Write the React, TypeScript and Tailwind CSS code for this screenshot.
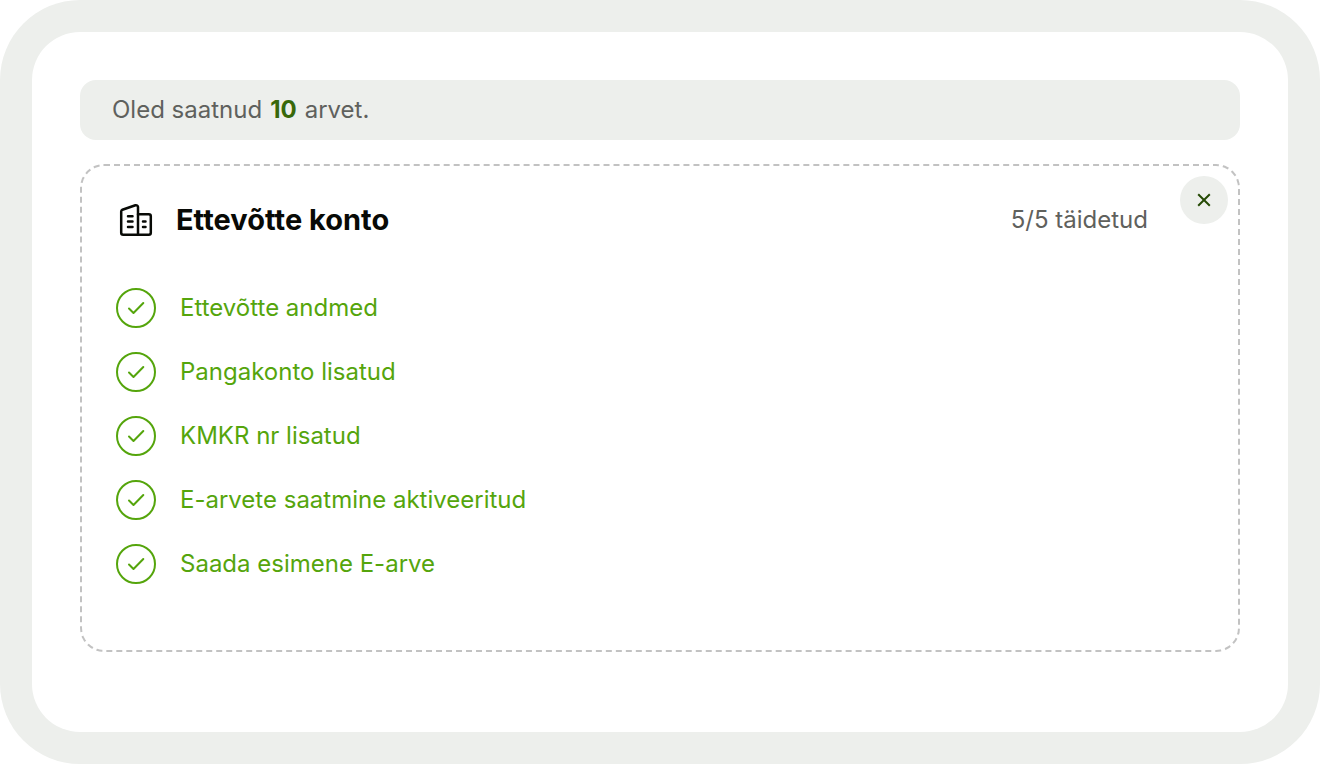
const tasks = [
  'Ettevõtte andmed',
  'Pangakonto lisatud',
  'KMKR nr lisatud',
  'E-arvete saatmine aktiveeritud',
  'Saada esimene E-arve',
];

function BuildingsIcon() {
  return (
    <svg
      viewBox="0 0 40 40"
      className="size-10 shrink-0 text-[#080a06]"
      fill="none"
      stroke="currentColor"
      strokeWidth="2.5"
      strokeLinecap="round"
      strokeLinejoin="round"
      aria-hidden="true"
    >
      <path d="M22 34.800H7.200a2 2 0 0 1-2-2V11.500a2 2 0 0 1 1.200-1.800l13-4.400A2 2 0 0 1 22 7V34.800Z" />
      <path d="M22 14.200h10.800a2 2 0 0 1 2 2V32.800a2 2 0 0 1-2 2H22" />
      <path d="M12 16.200h4.500M12 21.500h4.500M12 27h4.500M27 21.500h2.500M27 27h2.500" />
    </svg>
  );
}

function CheckIcon() {
  return (
    <svg
      viewBox="0 0 40 40"
      className="size-10 shrink-0"
      fill="none"
      stroke="currentColor"
      strokeWidth="2"
      strokeLinecap="round"
      strokeLinejoin="round"
      aria-hidden="true"
    >
      <circle cx="20" cy="20" r="19" />
      <path d="m13 20.500 4.500 4.500L27.300 15" />
    </svg>
  );
}

function App() {
  return (
    <div className="rounded-[80px] bg-[#edefec] p-8 font-['Inter','Liberation_Sans',sans-serif] text-2xl text-[#5f615d]">
      <main className="rounded-[48px] bg-white px-12 pt-12 pb-20">
        {/* Saadetud arved */}
        <p className="flex h-15 items-center gap-2 rounded-2xl bg-[#edefec] px-8">
          Oled saatnud <strong className="font-bold text-[#38680a]">10</strong> arvet.
        </p>

        {/* Konto seadistamine */}
        <section className="relative mt-6 rounded-3xl border-2 border-dashed border-[#c2c2c2] px-[34px] pt-[34px] pb-[66px]">
          <header className="flex items-center pr-14">
            <BuildingsIcon />
            <h2 className="ml-5 text-[29px] leading-10 font-bold text-[#080a06]">Ettevõtte konto</h2>
            <span className="ml-auto">5/5 täidetud</span>
          </header>

          <button
            type="button"
            aria-label="Sulge"
            className="absolute top-2.5 right-2.5 flex size-12 items-center justify-center rounded-full bg-[#edefec] text-[#254a05]"
          >
            <svg viewBox="0 0 16 16" className="size-4" fill="none" stroke="currentColor" strokeWidth="2">
              <path d="M2.200 2.200 13.800 13.800M13.800 2.200 2.200 13.800" />
            </svg>
          </button>

          <ul className="mt-12 flex flex-col gap-6 text-[#55a50c]">
            {tasks.map((task) => (
              <li key={task} className="flex items-center gap-6">
                <CheckIcon />
                {task}
              </li>
            ))}
          </ul>
        </section>
      </main>
    </div>
  );
}

export default App;
